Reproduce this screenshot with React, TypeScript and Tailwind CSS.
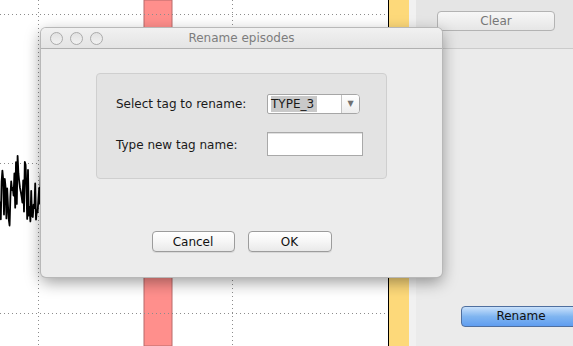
const signal = (() => {
  let seed = 11;
  const rand = () => {
    seed = (seed * 9301 + 49297) % 233280;
    return seed / 233280;
  };
  const pts: string[] = [];
  for (let x = 0; x <= 41; x += 0.8) {
    const y = 192 + (rand() - 0.5) * 64 + Math.sin(x / 4) * 7;
    pts.push(`${x.toFixed(1)},${y.toFixed(1)}`);
  }
  return pts.join(" ");
})();

function Plot() {
  return (
    <svg width="388" height="346" className="block shrink-0 bg-white">
      <rect x="144" y="0" width="28" height="346" fill="#ff8f8c" stroke="#b86a6a" strokeWidth="1" />
      <g stroke="#8c8c8c" strokeWidth="1" strokeDasharray="1 3">
        <line x1="0" y1="14.5" x2="388" y2="14.5" />
        <line x1="0" y1="163.5" x2="388" y2="163.5" />
        <line x1="0" y1="313.5" x2="388" y2="313.5" />
        <line x1="38.5" y1="0" x2="38.5" y2="346" />
        <line x1="232.5" y1="0" x2="232.5" y2="346" />
      </g>
      <polyline points={signal} fill="none" stroke="#000" strokeWidth="1.8" strokeLinejoin="round" />
    </svg>
  );
}

function MacButton({ label, className = "" }: { label: string; className?: string }) {
  return (
    <button
      className={`h-[21px] rounded-[4px] border border-[#9c9c9c] bg-gradient-to-b from-white via-[#f6f6f6] to-[#e9e9e9] text-[12px] leading-none text-[#111] shadow-[0_1px_0_rgba(0,0,0,0.08)] ${className}`}
    >
      {label}
    </button>
  );
}

function Dialog() {
  return (
    <div className="absolute left-[41px] top-[28px] flex h-[249px] w-[401px] flex-col overflow-hidden rounded-[5px] bg-[#ececec] shadow-[0_5px_16px_rgba(0,0,0,0.4)] ring-1 ring-[#b8b8b8]">
      <header className="relative flex h-[21px] shrink-0 items-center justify-center border-b border-[#b0b0b0] bg-gradient-to-b from-[#f1f1f1] to-[#e4e4e4]">
        <div className="absolute left-[9px] top-[4px] flex gap-[7px]">
          <span className="size-[13px] rounded-full border border-[#ababab] bg-gradient-to-b from-[#e2e2e2] to-[#f2f2f2]" />
          <span className="size-[13px] rounded-full border border-[#ababab] bg-gradient-to-b from-[#e2e2e2] to-[#f2f2f2]" />
          <span className="size-[13px] rounded-full border border-[#ababab] bg-gradient-to-b from-[#e2e2e2] to-[#f2f2f2]" />
        </div>
        <span className="text-[12px] text-[#7d7d7d]">Rename episodes</span>
      </header>

      <div className="ml-[55px] mt-[24px] h-[106px] w-[291px] rounded-[4px] border border-[#cfcfcf] bg-[#e3e3e3] pl-[19px] pt-[20px]">
        <div className="grid grid-cols-[151px_auto] items-center gap-y-[18px] text-[12px] text-[#1a1a1a]">
          <span>Select tag to rename:</span>
          <div className="flex h-[20px] w-[93px] overflow-hidden rounded-r-[4px] rounded-l-[2px] border border-[#a6a6a6] bg-white">
            <div className="flex flex-1 items-center pl-[3px]">
              <span className="bg-[#c9c9c9] pr-[3px] leading-[16px]">TYPE_3</span>
            </div>
            <div className="flex w-[18px] items-center justify-center border-l border-[#c2c2c2] bg-gradient-to-b from-white to-[#ededed] text-[8px] text-[#707070]">
              ▼
            </div>
          </div>
          <span className="relative top-[1px]">Type new tag name:</span>
          <div className="h-[24px] w-[96px] border border-[#a9a9a9] bg-white shadow-[inset_0_1px_0_#e0e0e0]" />
        </div>
      </div>

      <div className="mt-[52px] flex justify-center gap-[13px]">
        <MacButton label="Cancel" className="w-[83px]" />
        <MacButton label="OK" className="w-[84px]" />
      </div>
    </div>
  );
}

export default function App() {
  return (
    <div className="relative flex h-[346px] w-[573px] overflow-hidden bg-white font-['DejaVu_Sans',sans-serif]">
      <Plot />
      <div className="w-px shrink-0 bg-black" />
      <div className="w-[20px] shrink-0 bg-[#fdd97a]" />
      <div className="w-[7px] shrink-0 bg-[#f1f1f1]" />
      <aside className="flex flex-1 flex-col bg-[#ebebeb]">
        <div className="h-[49px] border-b border-[#cbcbcb] bg-[#e5e5e5] pl-[21px] pt-[8px]">
          <button className="h-[20px] w-[118px] rounded-[4px] border border-[#b3b3b3] bg-gradient-to-b from-[#f7f7f7] to-[#e6e6e6] text-[12px] leading-none text-[#777]">
            Clear
          </button>
        </div>
        <div className="pl-[45px] pt-[254px]">
          <button className="h-[21px] w-[120px] rounded-[4px] border border-[#4f6f9f] bg-gradient-to-b from-[#c9e1fb] via-[#80b5f0] to-[#5f9df0] text-[12px] leading-none text-[#111]">
            Rename
          </button>
        </div>
      </aside>
      <Dialog />
    </div>
  );
}
